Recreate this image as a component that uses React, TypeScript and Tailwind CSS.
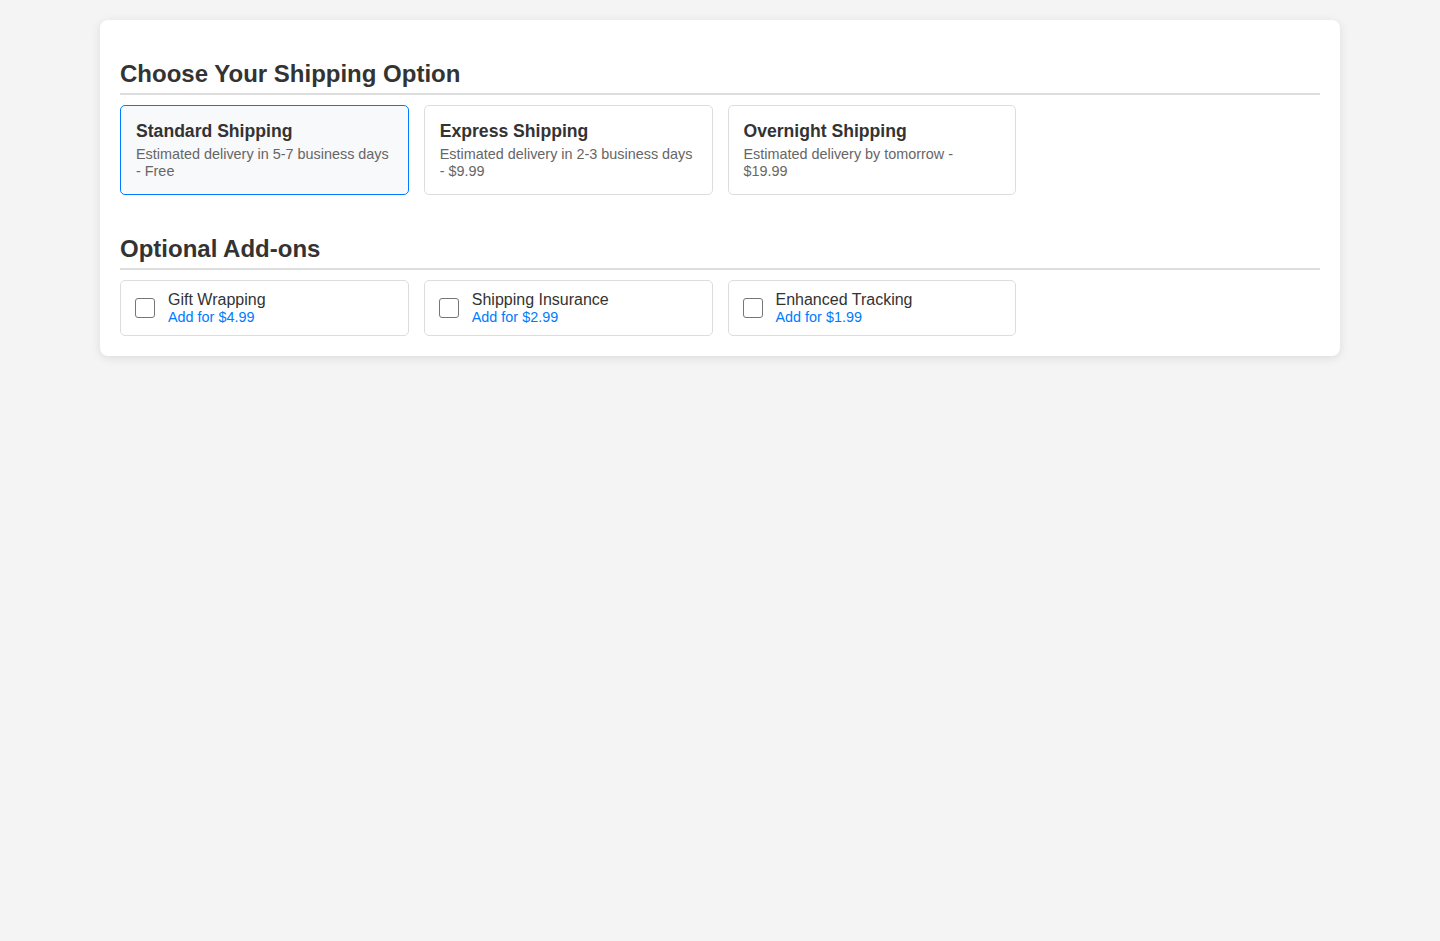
import React, { useState } from 'react';

const shippingOptions = [
  { id: 'standard', title: 'Standard Shipping', desc: 'Estimated delivery in 5-7 business days - Free' },
  { id: 'express', title: 'Express Shipping', desc: 'Estimated delivery in 2-3 business days - $9.99' },
  { id: 'overnight', title: 'Overnight Shipping', desc: 'Estimated delivery by tomorrow - $19.99' },
];

const addOns = [
  { id: 'gift', title: 'Gift Wrapping', price: 'Add for $4.99' },
  { id: 'insurance', title: 'Shipping Insurance', price: 'Add for $2.99' },
  { id: 'tracking', title: 'Enhanced Tracking', price: 'Add for $1.99' },
];

export default function App() {
  const [selected, setSelected] = useState('standard');
  const [checked, setChecked] = useState<Record<string, boolean>>({});

  return (
    <div className="min-h-screen bg-[#f4f4f4] pt-5 font-['Liberation_Sans',Arial,Helvetica,sans-serif] text-[#333]">
      <div className="mx-auto max-w-[1240px] rounded-lg bg-white p-5 shadow-[0_2px_10px_rgba(0,0,0,0.1)]">
        <section className="mb-10">
          <h2 className="mt-5 mb-[10px] border-b-2 border-[#ddd] pb-[5px] text-[24px] leading-[28px] font-bold">
            Choose Your Shipping Option
          </h2>
          <div className="grid grid-cols-[repeat(auto-fill,minmax(250px,1fr))] gap-[15px]">
            {shippingOptions.map((o) => (
              <div
                key={o.id}
                onClick={() => setSelected(o.id)}
                className={`cursor-pointer rounded-[5px] border p-[15px] ${
                  selected === o.id ? 'border-[#007bff] bg-[#f8f9fa]' : 'border-[#ddd] bg-white'
                }`}
              >
                <h3 className="mb-[5px] text-[17.6px] leading-[1.15] font-bold">{o.title}</h3>
                <p className="text-[14.4px] leading-[1.15] text-[#666]">{o.desc}</p>
              </div>
            ))}
          </div>
        </section>

        <section>
          <h2 className="mt-5 mb-[10px] border-b-2 border-[#ddd] pb-[5px] text-[24px] leading-[28px] font-bold">
            Optional Add-ons
          </h2>
          <div className="grid grid-cols-[repeat(auto-fill,minmax(250px,1fr))] gap-[15px]">
            {addOns.map((a) => (
              <label key={a.id} className="flex cursor-pointer items-center rounded-[5px] border border-[#ddd] bg-white p-[10px]">
                <input
                  type="checkbox"
                  checked={!!checked[a.id]}
                  onChange={(e) => setChecked({ ...checked, [a.id]: e.target.checked })}
                  className="mt-[3px] mr-[13px] mb-[3px] ml-1 h-5 w-5 appearance-none rounded-[3px] border border-[#767676] bg-white checked:bg-[#007bff]"
                />
                <div>
                  <div className="text-[16px] leading-[18px]">{a.title}</div>
                  <div className="text-[14.4px] leading-[16px] text-[#007bff]">{a.price}</div>
                </div>
              </label>
            ))}
          </div>
        </section>
      </div>
    </div>
  );
}
